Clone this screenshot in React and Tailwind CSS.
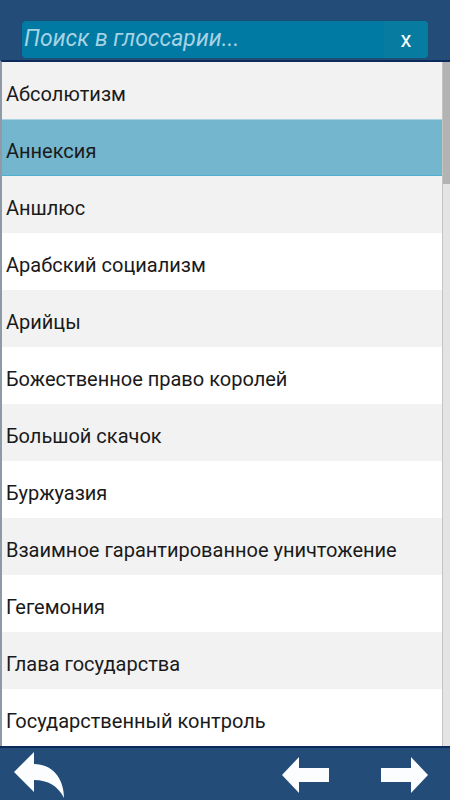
import React from "react";

const terms = [
  "Абсолютизм",
  "Аннексия",
  "Аншлюс",
  "Арабский социализм",
  "Арийцы",
  "Божественное право королей",
  "Большой скачок",
  "Буржуазия",
  "Взаимное гарантированное уничтожение",
  "Гегемония",
  "Глава государства",
  "Государственный контроль",
];

function BackIcon() {
  return (
    <svg width="52" height="46" viewBox="0 0 52 46">
      <path
        d="M0 20 L20 0 L20 12 C38 12 50 26 50 46 C44 34 34 28 20 28 L20 40 Z"
        fill="#fbfdff"
      />
    </svg>
  );
}

function ArrowLeft() {
  return (
    <svg width="48" height="40" viewBox="0 0 48 40">
      <path d="M0 20 L17 2 L17 13 L47 13 L47 27 L17 27 L17 38 Z" fill="#fbfdff" />
    </svg>
  );
}

function ArrowRight() {
  return (
    <svg width="48" height="40" viewBox="0 0 48 40">
      <path d="M48 20 L31 2 L31 13 L1 13 L1 27 L31 27 L31 38 Z" fill="#fbfdff" />
    </svg>
  );
}

export default function App() {
  return (
    <div
      className="w-[450px] h-[800px] flex flex-col bg-[#234d78] overflow-hidden"
      style={{ fontFamily: "Roboto, 'Noto Sans', sans-serif" }}
    >
      {/* search header */}
      <div className="h-[60px] shrink-0 pt-[20px] pl-[21px] pr-[21px]">
        <div className="h-[39px] flex rounded-[5px] border border-[#1a4f74] bg-[#0079a3] overflow-hidden">
          <div className="flex-1 flex items-center pl-[2px] text-[23px] italic text-[#a6d2e3]">
            Поиск в глоссарии...
          </div>
          <div className="w-[44px] flex items-center justify-center bg-[#087ba1] text-white text-[22px]">
            x
          </div>
        </div>
      </div>

      {/* list */}
      <div className="flex-1 flex bg-white border-t-2 border-[#0d2a5c] border-l-2 border-l-[#8e9aa6]">
        <div className="flex-1 flex flex-col">
          {terms.map((t, i) => {
            const selected = i === 1;
            const bg = selected
              ? "bg-[#74b6ce] border-t border-t-[#a9d3e2] border-b border-b-[#4db1cf]"
              : i % 2 === 0
              ? "bg-[#f2f2f2]"
              : "bg-white";
            return (
              <div
                key={t}
                className={`h-[57px] flex items-center pt-[6px] pl-[4px] text-[20px] text-[#1a1a1a] ${bg}`}
              >
                {t}
              </div>
            );
          })}
        </div>
        {/* scrollbar */}
        <div className="w-[8px] bg-[#e4e4e4] border-l border-[#c4c4c4] flex flex-col">
          <div className="h-[122px] bg-[#b3b3b3]" />
        </div>
      </div>

      {/* footer */}
      <div className="h-[55px] shrink-0 border-t-2 border-[#0d2a5c] flex items-center pl-[14px] pr-[22px]">
        <BackIcon />
        <div className="flex-1" />
        <ArrowLeft />
        <div className="w-[50px]" />
        <ArrowRight />
      </div>
    </div>
  );
}
